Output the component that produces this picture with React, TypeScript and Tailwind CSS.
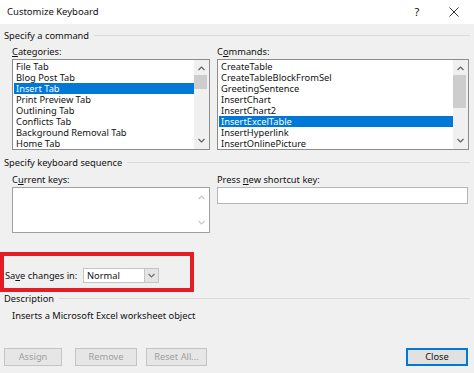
import React from "react";

const Up = ({ c = "#606060" }: { c?: string }) => (
  <svg width="7" height="5" viewBox="0 0 7 5"><path d="M0.5 4 L3.5 1 L6.5 4" fill="none" stroke={c} strokeWidth="1.2" /></svg>
);
const Down = ({ c = "#606060" }: { c?: string }) => (
  <svg width="7" height="5" viewBox="0 0 7 5"><path d="M0.5 1 L3.5 4 L6.5 1" fill="none" stroke={c} strokeWidth="1.2" /></svg>
);

function ListBox({ items, sel, thumbTop, thumbH }: { items: string[]; sel: number; thumbTop: number; thumbH: number }) {
  return (
    <div className="flex h-[91px] border border-[#8c8c8c] bg-white">
      <div className="flex-1 pt-[1px] pl-[1px]">
        {items.map((t, i) => (
          <div
            key={t}
            className={
              "h-[11px] leading-[11px] pl-[2px] whitespace-nowrap " +
              (i === sel ? "bg-[#0078d7] text-white" : "text-[#111]")
            }
          >
            {t}
          </div>
        ))}
      </div>
      <div className="relative w-[15px] bg-[#f0f0f0] flex flex-col items-center justify-between py-[6px]">
        <Up />
        <div className="absolute left-0 w-[13px] bg-[#cdcdcd]" style={{ top: thumbTop, height: thumbH }} />
        <Down />
      </div>
    </div>
  );
}

function SectionHead({ text, cls }: { text: string; cls: string }) {
  return (
    <div className={"flex items-center pl-[4px] pr-[4px] h-[13px] " + cls}>
      <span className="leading-[13px] text-[#111]">{text}</span>
      <div className="flex-1 ml-[5px] h-px bg-[#dadada]" />
    </div>
  );
}

function Btn({ label, w, primary }: { label: string; w: string; primary?: boolean }) {
  return (
    <div
      className={
        "h-[18px] flex items-center justify-center " +
        w +
        " " +
        (primary
          ? "border-2 border-[#0078d7] bg-[#e1e1e1] text-[#111]"
          : "border border-[#c4c4c4] bg-[#e6e6e6] text-[#9f9f9f]")
      }
    >
      {label}
    </div>
  );
}

export default function App() {
  return (
    <div
      className="relative w-[474px] h-[373px] bg-[#f0f0f0] overflow-hidden text-[9.3px]"
      style={{ fontFamily: '"Noto Sans", "Open Sans", sans-serif' }}
    >
      <div className="h-[24px] bg-white flex items-center pl-[7px] text-[#111]">
        <span className="text-[9.5px]">Customize Keyboard</span>
        <span className="ml-auto w-[8px] text-center text-[11px]">?</span>
        <span className="ml-[28px] mr-[15px] flex items-center">
          <svg width="10" height="10" viewBox="0 0 10 10">
            <path d="M0.5 0.5 L9.5 9.5 M9.5 0.5 L0.5 9.5" stroke="#333" strokeWidth="1" />
          </svg>
        </span>
      </div>

      <SectionHead text="Specify a command" cls="mt-[5px]" />

      <div className="flex pl-[12px] mt-[3px] h-[13px] leading-[13px] text-[#111]">
        <div className="w-[198px]"><span className="underline">C</span>ategories:</div>
        <div className="ml-[7px]">C<span className="underline">o</span>mmands:</div>
      </div>

      <div className="flex pl-[12px] mt-[1px]">
        <div className="w-[198px]">
          <ListBox
            items={["File Tab", "Blog Post Tab", "Insert Tab", "Print Preview Tab", "Outlining Tab", "Conflicts Tab", "Background Removal Tab", "Home Tab"]}
            sel={2}
            thumbTop={15}
            thumbH={14}
          />
        </div>
        <div className="w-[252px] ml-[7px]">
          <ListBox
            items={["CreateTable", "CreateTableBlockFromSel", "GreetingSentence", "InsertChart", "InsertChart2", "InsertExcelTable", "InsertHyperlink", "InsertOnlinePicture"]}
            sel={5}
            thumbTop={15}
            thumbH={33}
          />
        </div>
      </div>

      <SectionHead text="Specify keyboard sequence" cls="mt-[6px]" />

      <div className="flex pl-[12px] mt-[4px] h-[13px] leading-[13px] text-[#111]">
        <div className="w-[198px]">C<span className="underline">u</span>rrent keys:</div>
        <div className="ml-[7px]">Press <span className="underline">n</span>ew shortcut key:</div>
      </div>

      <div className="flex pl-[12px] mt-[1px] items-start">
        <div className="w-[198px] h-[46px] border border-[#a0a0a0] bg-white flex justify-end">
          <div className="w-[15px] flex flex-col items-center justify-between py-[7px]">
            <Up c="#c8c8c8" />
            <Down c="#c8c8c8" />
          </div>
        </div>
        <div className="w-[251px] ml-[7px] h-[17px] border border-[#b5b5b5] bg-white" />
      </div>

      <div className="flex items-center pl-[5px] mt-[35px] h-[15px] text-[#111]">
        <span className="w-[78px] whitespace-nowrap">Sa<span className="underline">v</span>e changes in:</span>
        <div className="w-[76px] h-[15px] border border-[#c4c4c4] bg-white flex">
          <span className="flex-1 pl-[3px] leading-[13px]">Normal</span>
          <div className="w-[14px] bg-[#e5e5e5] border-l border-[#c4c4c4] flex items-center justify-center">
            <Down c="#707070" />
          </div>
        </div>
      </div>

      <SectionHead text="Description" cls="mt-[9px]" />

      <div className="pl-[12px] mt-[4px] h-[13px] leading-[13px] text-[#111]">
        Inserts a Microsoft Excel worksheet object
      </div>

      <div className="flex items-center pl-[4px] pr-[6px] mt-[26px]">
        <Btn label="Assign" w="w-[58px]" />
        <div className="ml-[13px]"><Btn label="Remove" w="w-[62px]" /></div>
        <div className="ml-[9px]"><Btn label="Reset All..." w="w-[61px]" /></div>
        <div className="ml-auto"><Btn label="Close" w="w-[62px]" primary /></div>
      </div>

      <div className="absolute left-0 top-[252px] w-[194px] h-[40px] border-4 border-[#e21d26]" />
    </div>
  );
}
